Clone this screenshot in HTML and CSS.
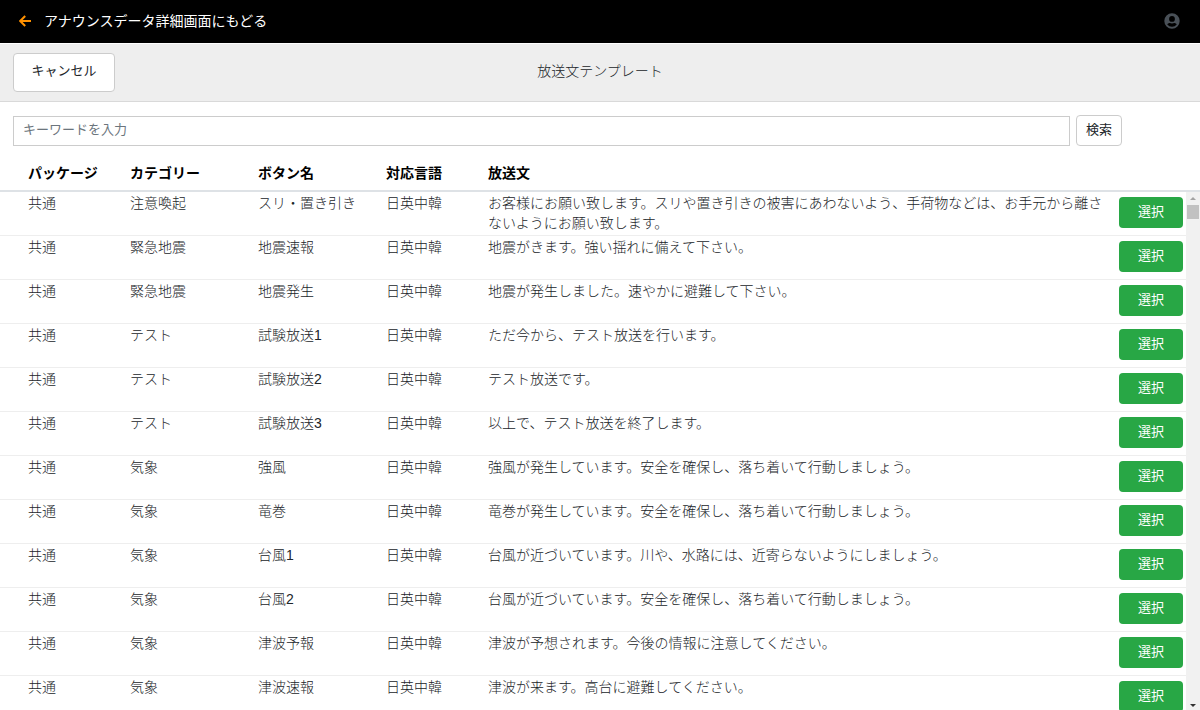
FILE: index.html
```html
<!DOCTYPE html>
<html lang="ja">
<head>
<meta charset="utf-8">
<meta name="viewport" content="width=device-width, initial-scale=1">
<title>放送文テンプレート</title>
<link rel="stylesheet" href="styles.css">
</head>
<body>
<header class="topbar">
  <a class="back" href="#">
    <svg class="back-icon" viewBox="0 0 12 12" aria-hidden="true"><path d="M6.2 1 1.2 6l5 5M1.5 6H12"/></svg>
    <span>アナウンスデータ詳細画面にもどる</span>
  </a>
  <button class="account" type="button" aria-label="アカウント">
    <svg class="account-icon" viewBox="0 0 16 16" aria-hidden="true"><path fill-rule="evenodd" d="M8 .3a7.7 7.7 0 1 0 0 15.4A7.7 7.7 0 0 0 8 .3zM8 3a2.9 2.9 0 1 1 0 5.8A2.9 2.9 0 0 1 8 3zM3.3 11.6c.5-1 1.400-1.500 2.500-1.500 1.400.5 3 .5 4.400 0 1.100 0 2 .5 2.500 1.500A5.900 5.900 0 0 1 8 13.800a5.900 5.900 0 0 1-4.700-2.200z"/></svg>
  </button>
</header>
<div class="titlebar">
  <button class="btn btn-cancel" type="button">キャンセル</button>
  <h1 class="title">放送文テンプレート</h1>
</div>
<form class="search">
  <input class="keyword" type="text" placeholder="キーワードを入力" aria-label="キーワードを入力">
  <button class="btn btn-search" type="button">検索</button>
</form>
<main class="list">
  <div class="list-scroll">
    <table class="templates">
      <colgroup><col class="col-package"><col class="col-category"><col class="col-name"><col class="col-lang"><col><col class="col-action"></colgroup>
      <thead>
        <tr><th scope="col">パッケージ</th><th scope="col">カテゴリー</th><th scope="col">ボタン名</th><th scope="col">対応言語</th><th scope="col">放送文</th><td></td></tr>
      </thead>
      <tbody>
        <tr><td>共通</td><td>注意喚起</td><td>スリ・置き引き</td><td>日英中韓</td><td>お客様にお願い致します。スリや置き引きの被害にあわないよう、手荷物などは、お手元から離さないようにお願い致します。</td><td><button class="btn-select" type="button">選択</button></td></tr>
        <tr><td>共通</td><td>緊急地震</td><td>地震速報</td><td>日英中韓</td><td>地震がきます。強い揺れに備えて下さい。</td><td><button class="btn-select" type="button">選択</button></td></tr>
        <tr><td>共通</td><td>緊急地震</td><td>地震発生</td><td>日英中韓</td><td>地震が発生しました。速やかに避難して下さい。</td><td><button class="btn-select" type="button">選択</button></td></tr>
        <tr><td>共通</td><td>テスト</td><td>試験放送1</td><td>日英中韓</td><td>ただ今から、テスト放送を行います。</td><td><button class="btn-select" type="button">選択</button></td></tr>
        <tr><td>共通</td><td>テスト</td><td>試験放送2</td><td>日英中韓</td><td>テスト放送です。</td><td><button class="btn-select" type="button">選択</button></td></tr>
        <tr><td>共通</td><td>テスト</td><td>試験放送3</td><td>日英中韓</td><td>以上で、テスト放送を終了します。</td><td><button class="btn-select" type="button">選択</button></td></tr>
        <tr><td>共通</td><td>気象</td><td>強風</td><td>日英中韓</td><td>強風が発生しています。安全を確保し、落ち着いて行動しましょう。</td><td><button class="btn-select" type="button">選択</button></td></tr>
        <tr><td>共通</td><td>気象</td><td>竜巻</td><td>日英中韓</td><td>竜巻が発生しています。安全を確保し、落ち着いて行動しましょう。</td><td><button class="btn-select" type="button">選択</button></td></tr>
        <tr><td>共通</td><td>気象</td><td>台風1</td><td>日英中韓</td><td>台風が近づいています。川や、水路には、近寄らないようにしましょう。</td><td><button class="btn-select" type="button">選択</button></td></tr>
        <tr><td>共通</td><td>気象</td><td>台風2</td><td>日英中韓</td><td>台風が近づいています。安全を確保し、落ち着いて行動しましょう。</td><td><button class="btn-select" type="button">選択</button></td></tr>
        <tr><td>共通</td><td>気象</td><td>津波予報</td><td>日英中韓</td><td>津波が予想されます。今後の情報に注意してください。</td><td><button class="btn-select" type="button">選択</button></td></tr>
        <tr><td>共通</td><td>気象</td><td>津波速報</td><td>日英中韓</td><td>津波が来ます。高台に避難してください。</td><td><button class="btn-select" type="button">選択</button></td></tr>
      </tbody>
    </table>
  </div>
  <div class="scrollbar" aria-hidden="true">
    <span class="arrow arrow-up"></span>
    <span class="thumb"></span>
    <span class="arrow arrow-down"></span>
  </div>
</main>
</body>
</html>
```
FILE: styles.css
```css
* { box-sizing: border-box; }

body {
  margin: 0;
  height: 100vh;
  display: flex;
  flex-direction: column;
  overflow: hidden;
  background: #fff;
  color: #212529;
  font-family: "Liberation Sans", "Noto Sans CJK JP", sans-serif;
  font-size: 14px;
  line-height: 20px;
}

button, input { font: inherit; }
button { cursor: pointer; }

.topbar {
  display: flex;
  flex: none;
  align-items: center;
  justify-content: space-between;
  height: 43px;
  padding: 0 20px 2px 19px;
  background: #000;
}

.back {
  display: flex;
  align-items: center;
  gap: 13px;
  color: #fff;
  text-decoration: none;
}

.back-icon {
  width: 12px;
  height: 12px;
  fill: none;
  stroke: #ff9100;
  stroke-width: 2;
}

.account {
  display: flex;
  padding: 0;
  border: 0;
  background: none;
}

.account-icon {
  width: 16px;
  height: 16px;
  fill: #495057;
}

.titlebar {
  display: grid;
  flex: none;
  grid-template-columns: 1fr auto 1fr;
  align-items: center;
  height: 58px;
  margin-top: 1px;
  padding: 0 13px 1px;
  border-bottom: 1px solid #d9d9d9;
  background: #eee;
}

.title {
  margin: 0;
  padding-bottom: 2px;
  font-size: 14px;
  font-weight: 300;
}

.btn {
  padding: 0 0 2px;
  border: 1px solid #ccc;
  border-radius: 4px;
  background: #fff;
  color: #212529;
  font-size: 13px;
}

.btn-cancel {
  justify-self: start;
  width: 102px;
  height: 39px;
}

.search {
  display: flex;
  flex: none;
  align-items: center;
  gap: 6px;
  padding: 13px 78px 0 13px;
}

.keyword {
  flex: 1;
  min-width: 0;
  height: 30px;
  padding: 0 9px 2px;
  border: 1px solid #ccc;
  font-size: 13px;
}

.keyword::placeholder { color: #6c757d; }

.btn-search {
  width: 46px;
  height: 31px;
}

.list {
  position: relative;
  flex: 1;
  min-height: 0;
  margin-top: 9px;
}

.list-scroll {
  height: 100%;
  overflow-y: auto;
  scrollbar-width: none;
}

.templates {
  width: 100%;
  table-layout: fixed;
  border-collapse: separate;
  border-spacing: 0;
}

.col-package { width: 122px; }
.col-category, .col-name { width: 128px; }
.col-lang { width: 102px; }
.col-action { width: 89px; }

.templates th,
.templates td {
  padding: 1px 0 0 8px;
  border-bottom: 1px solid #eee;
  text-align: left;
  vertical-align: top;
}

.templates tr > :first-child { padding-left: 28px; }

.templates thead th,
.templates thead td {
  position: sticky;
  top: 0;
  height: 37px;
  padding-top: 8px;
  border-bottom: 2px solid #dee2e6;
  background: #fff;
  color: #000;
}

.templates tbody td {
  height: 44px;
  font-weight: 300;
}

.templates tbody td:last-child {
  padding-top: 5px;
}

.btn-select {
  display: block;
  width: 64px;
  height: 31px;
  padding: 0 0 2px;
  border: 0;
  border-radius: 4px;
  background: #28a745;
  color: #fff;
  font-size: 13px;
  font-weight: 400;
}

.scrollbar {
  position: absolute;
  top: 37px;
  right: 0;
  bottom: 0;
  display: flex;
  flex-direction: column;
  align-items: center;
  width: 14px;
  padding: 5px 0 3px;
  background: #f1f1f1;
}

.arrow {
  border: 3px solid transparent;
}

.arrow-up {
  border-top: 0;
  border-bottom-color: #a3a3a3;
}

.arrow-down {
  margin-top: auto;
  border-bottom: 0;
  border-top-color: #333;
}

.thumb {
  width: 12px;
  height: 14px;
  margin-top: 5px;
  background: #c1c1c1;
}
```
